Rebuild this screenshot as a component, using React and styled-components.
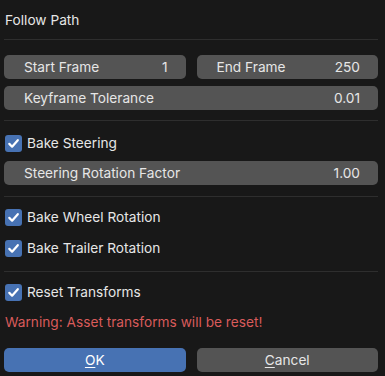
import React from "react";
import styled, { createGlobalStyle } from "styled-components";

const Global = createGlobalStyle`
  html, body { margin: 0; padding: 0; background: #181818; }
  body { font-family: Inter, "Noto Sans", sans-serif; color: #e6e6e6; }
`;

const Dialog = styled.div`
  width: 385px;
  height: 376px;
  box-sizing: border-box;
  padding: 0 7px 0 4px;
  background: #181818;
  font-size: 13.7px;
  overflow: hidden;
`;

const Title = styled.div`
  height: 39px;
  display: flex;
  align-items: center;
  padding-left: 1px;
  color: #e6e6e6;
`;

const Separator = styled.div`
  height: 1px;
  background: #2e2e2e;
  margin-top: ${(p) => p.$mt || 0}px;
`;

const Row = styled.div`
  display: flex;
  gap: 11px;
  margin-top: ${(p) => p.$mt || 0}px;
`;

const Field = styled.div`
  flex: 1 1 0;
  height: 24px;
  box-sizing: border-box;
  background: #545454;
  border-radius: 5px;
  display: flex;
  align-items: center;
  justify-content: space-between;
  padding: 0 18px 0 20px;
  color: #e6e6e6;
  margin-top: ${(p) => p.$mt || 0}px;
`;

const CheckRow = styled.label`
  height: 24px;
  display: flex;
  align-items: center;
  gap: 5px;
  padding-left: 1px;
  margin-top: ${(p) => p.$mt || 0}px;
`;

const Box = styled.span`
  width: 17px;
  height: 17px;
  border-radius: 3px;
  background: #4772b3;
  display: flex;
  align-items: center;
  justify-content: center;
`;

const Warning = styled.div`
  height: 24px;
  display: flex;
  align-items: center;
  padding-left: 1px;
  color: #d95b5b;
  margin-top: ${(p) => p.$mt || 0}px;
`;

const Button = styled.div`
  flex: 1 1 0;
  height: 24px;
  border-radius: 5px;
  display: flex;
  align-items: center;
  justify-content: center;
  background: ${(p) => (p.$primary ? "#4772b3" : "#545454")};
  color: ${(p) => (p.$primary ? "#ffffff" : "#e6e6e6")};
  u { text-decoration-thickness: 1px; text-underline-offset: 2px; }
`;

const Check = ({ label, mt }) => (
  <CheckRow $mt={mt}>
    <Box>
      <svg width="13" height="13" viewBox="0 0 13 13">
        <path d="M2.3 6.9 L5.1 9.7 L10.8 3.2" fill="none" stroke="#fff" strokeWidth="2.2" strokeLinecap="round" strokeLinejoin="round" />
      </svg>
    </Box>
    <span>{label}</span>
  </CheckRow>
);

export default function App() {
  return (
    <>
      <Global />
      <Dialog>
        <Title>Follow Path</Title>
        <Separator />
        <Row $mt={15}>
          <Field><span>Start Frame</span><span>1</span></Field>
          <Field><span>End Frame</span><span>250</span></Field>
        </Row>
        <Field $mt={7}><span>Keyframe Tolerance</span><span>0.01</span></Field>
        <Separator $mt={10} />
        <Check label="Bake Steering" mt={10} />
        <Field $mt={6}><span>Steering Rotation Factor</span><span>1.00</span></Field>
        <Separator $mt={11} />
        <Check label="Bake Wheel Rotation" mt={8} />
        <Check label="Bake Trailer Rotation" mt={7} />
        <Separator $mt={11} />
        <Check label="Reset Transforms" mt={8} />
        <Warning $mt={6}>Warning: Asset transforms will be reset!</Warning>
        <Row $mt={14}>
          <Button $primary><span><u>O</u>K</span></Button>
          <Button><span><u>C</u>ancel</span></Button>
        </Row>
      </Dialog>
    </>
  );
}
